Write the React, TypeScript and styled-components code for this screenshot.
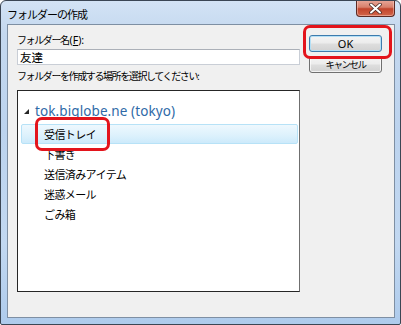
import React from "react";
import styled, { createGlobalStyle } from "styled-components";

const GlobalStyle = createGlobalStyle`
  html, body {
    margin: 0;
    padding: 0;
    background: #ffffff;
  }
  body {
    font-family: "Noto Sans CJK JP", "Noto Sans", sans-serif;
  }
`;

const Window = styled.div`
  position: relative;
  box-sizing: border-box;
  width: 401px;
  height: 325px;
  border: 1px solid #3b4654;
  border-radius: 6px 6px 2px 2px;
  padding: 0 5px 6px 6px;
  display: flex;
  flex-direction: column;
  background: linear-gradient(
    180deg,
    #d3e3f5 0%,
    #c4d8ef 10%,
    #bcd3ee 40%,
    #c2d8f1 75%,
    #aecbec 100%
  );
  overflow: hidden;
`;

const TitleBar = styled.div`
  height: 23px;
  display: flex;
  align-items: center;
  justify-content: space-between;
`;

const Title = styled.span`
  font-size: 11px;
  letter-spacing: -1px;
  color: #000;
  margin-top: 2px;
`;

const CloseButton = styled.div`
  align-self: flex-start;
  box-sizing: border-box;
  width: 39px;
  height: 17px;
  margin-top: -1px;
  border: 1px solid #5c2a24;
  border-top: none;
  border-radius: 0 0 4px 4px;
  background: linear-gradient(180deg, #e9a99b 0%, #d8806c 45%, #c2442c 55%, #d2664b 100%);
  box-shadow: inset 0 0 0 1px rgba(255, 220, 210, 0.45);
  display: flex;
  align-items: center;
  justify-content: center;
`;

const Client = styled.div`
  flex: 1;
  border: 1px solid #7e8fa3;
  background: #f0f0f0;
  display: flex;
  padding: 7px 0 0 9px;
  gap: 9px;
`;

const LeftColumn = styled.div`
  width: 283px;
  display: flex;
  flex-direction: column;
`;

const Label = styled.div<{ $gap: number }>`
  font-size: 10px;
  letter-spacing: -1.4px;
  line-height: 16px;
  height: 16px;
  color: #000;
  margin-bottom: ${(p) => p.$gap}px;
  white-space: nowrap;
`;

const Latin = styled.span`
  font-family: "Noto Sans", sans-serif;
  font-size: 10.5px;
  letter-spacing: 0;
  margin-left: 1px;
`;

const TextBox = styled.div`
  box-sizing: border-box;
  height: 16px;
  border: 1px solid #c9ced6;
  border-top-color: #abb0b8;
  background: #fff;
  padding-left: 2px;
  font-size: 11.5px;
  line-height: 14px;
  color: #000;
  margin-bottom: 3px;
`;

const TreeBox = styled.div`
  box-sizing: border-box;
  height: 202px;
  border: 1px solid #262626;
  border-right-color: #6f6f6f;
  background: #fff;
  padding: 10px 1px 0 3px;
  display: flex;
  flex-direction: column;
`;

const RootRow = styled.div`
  height: 20px;
  display: flex;
  align-items: center;
  margin-bottom: 3px;
  padding-left: 3px;
  gap: 6px;
`;

const RootText = styled.span`
  font-family: "Noto Sans", "Open Sans", sans-serif;
  font-size: 13.5px;
  color: #2f6aa7;
  letter-spacing: 0.1px;
`;

const TreeItem = styled.div<{ $selected?: boolean }>`
  box-sizing: border-box;
  height: 20px;
  display: flex;
  align-items: center;
  padding-left: 22px;
  font-size: 11px;
  letter-spacing: -0.6px;
  color: #000;
  border: 1px solid ${(p) => (p.$selected ? "#b7e2f7" : "transparent")};
  border-radius: 2px;
  background: ${(p) =>
    p.$selected ? "linear-gradient(180deg, #eef8fe 0%, #dcf1fc 60%, #cdeafb 100%)" : "transparent"};
`;

const RightColumn = styled.div`
  display: flex;
  flex-direction: column;
  gap: 4px;
  padding-top: 3px;
`;

const Button = styled.div<{ $focused?: boolean }>`
  box-sizing: border-box;
  width: 73px;
  height: 17px;
  border: 1px solid ${(p) => (p.$focused ? "#3d7bad" : "#707070")};
  border-radius: 3px;
  background: linear-gradient(180deg, #f4f4f4 0%, #ececec 48%, #dedede 52%, #d2d2d2 100%);
  box-shadow: ${(p) =>
    p.$focused ? "inset 0 0 0 1px #b4e0f6" : "inset 0 0 0 1px rgba(255,255,255,0.7)"};
  display: flex;
  align-items: center;
  justify-content: center;
  color: #000;
`;

const ButtonText = styled.span<{ $latin?: boolean }>`
  font-family: ${(p) =>
    p.$latin ? '"Noto Sans", sans-serif' : '"Noto Sans CJK JP", sans-serif'};
  font-size: ${(p) => (p.$latin ? "11px" : "9.5px")};
  letter-spacing: ${(p) => (p.$latin ? "0" : "-1.5px")};
  line-height: 15px;
`;

const Ring = styled.div<{ $x: number; $y: number; $w: number; $h: number }>`
  position: absolute;
  left: ${(p) => p.$x}px;
  top: ${(p) => p.$y}px;
  width: ${(p) => p.$w}px;
  height: ${(p) => p.$h}px;
  box-sizing: border-box;
  border: 3px solid #e3141c;
  border-radius: 7px;
  pointer-events: none;
`;

const folders = ["受信トレイ", "下書き", "送信済みアイテム", "迷惑メール", "ごみ箱"];

export default function App() {
  return (
    <>
      <GlobalStyle />
      <Window>
        <TitleBar>
          <Title>フォルダーの作成</Title>
          <CloseButton>
            <svg width="13" height="11" viewBox="0 0 13 11">
              <path
                d="M2 1.5 L11 9.5 M11 1.5 L2 9.5"
                stroke="#4a2a26"
                strokeWidth="3.6"
                strokeLinecap="round"
              />
              <path
                d="M2 1.5 L11 9.5 M11 1.5 L2 9.5"
                stroke="#ffffff"
                strokeWidth="2"
                strokeLinecap="round"
              />
            </svg>
          </CloseButton>
        </TitleBar>
        <Client>
          <LeftColumn>
            <Label $gap={1}>
              フォルダー名
              <Latin>
                (<u>F</u>):
              </Latin>
            </Label>
            <TextBox>友達</TextBox>
            <Label $gap={6}>フォルダーを作成する場所を選択してください:</Label>
            <TreeBox>
              <RootRow>
                <svg width="5" height="5" viewBox="0 0 5 5">
                  <path d="M5 0 L5 5 L0 5 Z" fill="#262626" />
                </svg>
                <RootText>tok.biglobe.ne (tokyo)</RootText>
              </RootRow>
              {folders.map((name, i) => (
                <TreeItem key={name} $selected={i === 0}>
                  {name}
                </TreeItem>
              ))}
            </TreeBox>
          </LeftColumn>
          <RightColumn>
            <Button $focused>
              <ButtonText $latin>OK</ButtonText>
            </Button>
            <Button>
              <ButtonText>キャンセル</ButtonText>
            </Button>
          </RightColumn>
        </Client>
        <Ring $x={302} $y={24} $w={89} $h={34} />
        <Ring $x={34} $y={116} $w={75} $h={34} />
      </Window>
    </>
  );
}
